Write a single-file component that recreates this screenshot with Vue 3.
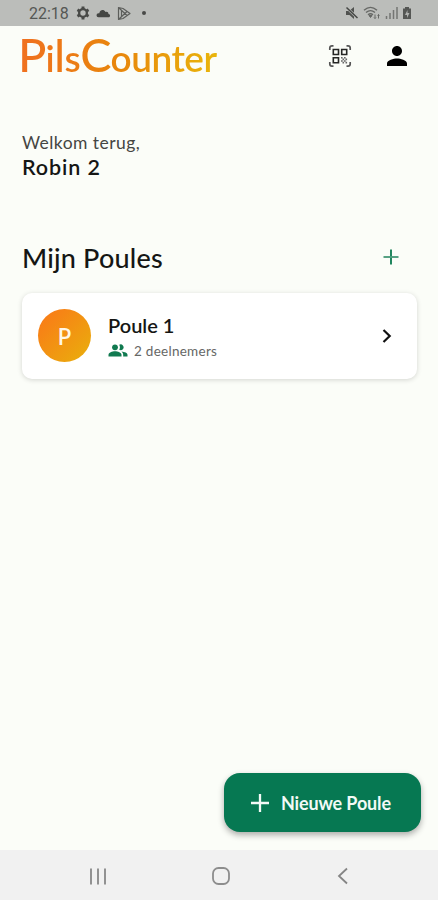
<script setup>
const pools = [{ name: 'Poule 1', initial: 'P', members: '2 deelnemers' }]
</script>

<template>
  <div class="screen">
    <div class="status">
      <div class="left">
        <span class="time">22:18</span>
        <svg class="s-gear" width="14" height="14" viewBox="0 0 24 24"><circle cx="12" cy="12" r="6.6" fill="none" stroke="#484a47" stroke-width="4" /><g stroke="#484a47" stroke-width="5"><path d="M12 1v4M12 19v4M2.5 6.5l3.4 2M18.1 15.5l3.4 2M2.5 17.5l3.4-2M18.1 8.500l3.4-2" /></g></svg>
        <svg class="s-cloud" width="15" height="9" viewBox="0 0 15 9"><path d="M2.500 8.300a2 2 0 0 1 0-4h.8C4 1 7.500-.2 9.500 3c2-.5 2.800.5 3 2 2.200.2 2 3.300 0 3.300z" fill="#444643" /></svg>
        <svg class="s-play" width="15" height="15" viewBox="0 0 15 15" fill="none" stroke="#5c5e5b" stroke-width="1.200" stroke-linejoin="round"><path d="M1.500 1.500v12L6 12.500 13 7.500 6 2.500zM2 2l8 7.500M2 13l8-7.500M4.500 4.500v6" /></svg>
        <i class="dot"></i>
      </div>
      <div class="right">
        <svg width="14" height="14" viewBox="0 0 14 14"><path d="M1 5h3l5-4v12L4.500 9H1z" fill="#50524f" /><path d="M1 1l12 11.500" stroke="#bbbdba" stroke-width="2.600" /><path d="M1.500 1.500l11 10.500" stroke="#454744" stroke-width="1.500" /></svg>
        <svg width="18" height="14" viewBox="0 0 18 14" fill="none" stroke="#666865"><path d="M1 4.200c4-3.500 9-3.500 13 0M3 6.500c3-2.500 6-2.500 9 0M5 8.700c1.700-1.300 3.300-1.300 5 0" stroke-width="1.400" /><path d="M6 9.500h3l-1.500 2z" fill="#666865" /><path d="M12 8.500v4M15.500 8.500v4M11 11.500l1 1 1-1M14.500 9.500l1-1 1 1" /></svg>
        <svg width="13" height="14" viewBox="0 0 13 14" stroke="#747673" stroke-width="1.500"><path d="M1.500 10v3M5 7v6M8.500 4v9M12 1v12" /></svg>
        <svg width="10" height="14" viewBox="0 0 10 14"><path d="M3 1h4v1.500h2V13H1V2.500h2z" fill="#555754" /><path d="M5.500 4L3 9h2v3l2.500-5H5.500z" fill="#b0b2af" /></svg>
      </div>
    </div>

    <header class="top">
      <h1 class="logo"><span class="cap">P</span>i<span class="tall">l</span>s<span class="cap">C</span>ounter</h1>
      <div class="actions">
        <svg width="24" height="24" viewBox="0 0 24 24" fill="none" stroke="#252624">
          <path d="M1.800 6V4q0-2.200 2.200-2.200h1.500M18.500 1.800H20q2.200 0 2.200 2.200v2M1.800 18v2q0 2.200 2.200 2.200h1.500M18.500 22.200H20q2.200 0 2.200-2.200v-2" stroke-width="1.700" stroke="#555" />
          <path d="M5.300 5.500h5.200v5H5.300zM13.700 5.500h5v5h-5zM5.300 13.700h5.200v5H5.300z" stroke-width="1.600" />
          <path d="M13 13h1.600v1.600H13zM16 13h1.600v1.600H16zM14.500 14.600h1.600v1.600h-1.600zM17.500 14.600h1.600v1.600h-1.600zM13 16.200h1.600v1.600H13zM16 16.200h1.600v1.600H16zM14.500 17.800h1.600v1.600h-1.600zM17.500 17.800h1.600v1.600h-1.600z" fill="#666" stroke="none" />
        </svg>
        <svg width="20" height="20" viewBox="4 4 16 16"><path d="M12 12c2.210 0 4-1.790 4-4s-1.790-4-4-4-4 1.790-4 4 1.790 4 4 4zm0 2c-2.670 0-8 1.340-8 4v2h16v-2c0-2.660-5.330-4-8-4z" fill="#000" /></svg>
      </div>
    </header>

    <main>
      <section class="welcome">
        <p class="hello">Welkom terug,</p>
        <p class="name">Robin 2</p>
      </section>
      <div class="heading">
        <h2>Mijn Poules</h2>
        <svg width="16" height="16" viewBox="0 0 16 16"><path d="M8 .500v15" stroke="#168057" stroke-width="1.900" /><path d="M.500 8h15" stroke="#4f9c7d" stroke-width="1.900" /></svg>
      </div>
      <article v-for="pool in pools" :key="pool.name" class="card">
        <div class="avatar">{{ pool.initial }}</div>
        <div class="info">
          <h3>{{ pool.name }}</h3>
          <div class="members">
            <svg width="20" height="13" viewBox="0 0 20 13" fill="#117a50"><circle cx="7" cy="3.300" r="2.900" /><path d="M.500 12.500v-1.700c0-2.300 3.700-3.500 6.500-3.500s6.500 1.200 6.500 3.500v1.700z" /><path d="M11.200.800a2.900 2.900 0 1 1 0 5q1.500-2.500 0-5zM13.500 7.400c3.200.3 6 1.400 6 3.400v1.700h-4.300v-1.700q0-2-1.700-3.400z" /></svg>
            <span>{{ pool.members }}</span>
          </div>
        </div>
        <svg class="chevron" width="10" height="14" viewBox="0 0 10 14"><path d="M1.500 1L7.700 7l-6.200 6" fill="none" stroke="#111" stroke-width="2.200" /></svg>
      </article>
    </main>

    <div class="fab-row">
      <button class="fab">
        <svg width="18" height="18" viewBox="0 0 18 18"><path d="M9 0v18M0 9h18" stroke="#f2faf6" stroke-width="2.300" /></svg>
        <span>Nieuwe Poule</span>
      </button>
    </div>

    <nav class="nav">
      <svg width="18" height="17" viewBox="0 0 18 17"><path d="M2 .500v16M9 .500v16M16 .500v16" stroke="#929292" stroke-width="2" /></svg>
      <svg width="18" height="18" viewBox="0 0 18 18"><rect x="1" y="1" width="16" height="16" rx="5.500" fill="none" stroke="#8d8d8d" stroke-width="1.800" /></svg>
      <svg width="18" height="18" viewBox="0 0 18 18"><path d="M13 1.500L5 9l8 7.500" fill="none" stroke="#858585" stroke-width="1.800" /></svg>
    </nav>
  </div>
</template>

<style>
body { background: #fbfdf8; }
</style>

<style scoped>
* { box-sizing: border-box; }
h1, h2, h3, p { margin: 0; font-weight: 400; }
svg { display: block; flex: none; }
.screen { width: 438px; height: 900px; display: flex; flex-direction: column; background: #fbfdf8; font-family: Lato, "Liberation Sans", sans-serif; color: #151614; overflow: hidden; white-space: nowrap; }
.status { height: 26px; flex: none; background: #bbbdba; display: flex; justify-content: space-between; align-items: center; padding: 0 26px 0 29px; }
.left, .right { display: flex; align-items: center; }
.time { font: 400 16px/26px Roboto, sans-serif; color: #555754; width: 47px; padding-top: 1px; }
.s-cloud { margin-left: 6px; }
.s-play { margin-left: 6px; }
.dot { width: 4px; height: 4px; border-radius: 50%; background: #484a47; margin-left: 10px; }
.right { gap: 4px; }
.top { height: 60px; flex: none; padding: 0 31px 0 18px; display: flex; justify-content: space-between; align-items: center; }
.logo { font-size: 37px; line-height: 60px; padding-top: 4px; font-weight: 600; letter-spacing: -0.5px; background: linear-gradient(90deg, #f07020, #e8860c 50%, #e9b50b); background-clip: text; -webkit-background-clip: text; color: transparent; }
.cap { font-size: 47px; line-height: 1; font-weight: 500; letter-spacing: -0.9px; }
.tall { font-size: 45px; line-height: 1; font-weight: 500; }
.actions { display: flex; gap: 35px; align-items: center; }
main { flex: 1; padding: 46px 21px 0 22px; }
.hello { font-size: 17.500px; line-height: 22px; letter-spacing: 0.45px; color: #454643; }
.name { font-size: 21.500px; line-height: 26px; font-weight: 600; letter-spacing: 0.9px; }
.heading { display: flex; justify-content: space-between; align-items: center; height: 40px; margin-top: 58px; padding-right: 18px; }
.heading svg { margin-bottom: 2px; }
h2 { font-size: 27px; line-height: 40px; font-weight: 500; letter-spacing: 0.2px; }
.card { margin-top: 15px; height: 86px; border-radius: 10px; background: #fff; box-shadow: 0 1px 5px rgba(0, 0, 0, 0.16); display: flex; align-items: center; padding: 0 25px 1px 16px; }
.avatar { width: 53px; height: 53px; border-radius: 50%; background: linear-gradient(135deg, #fb7618, #e9b00c); color: #fff7e8; font-size: 22px; line-height: 55px; font-weight: 600; text-align: center; }
.info { flex: 1; margin-left: 17px; padding-top: 3px; }
h3 { font-size: 20px; line-height: 26px; font-weight: 600; }
.members { display: flex; align-items: center; gap: 6px; font-size: 13.500px; line-height: 24px; letter-spacing: 0.27px; color: #666765; }
.members span { padding-top: 1px; }
.fab-row { display: flex; justify-content: flex-end; padding: 0 17px 18px 0; }
.fab { width: 197px; height: 59px; border: 0; border-radius: 16px; background: #067852; box-shadow: 0 3px 6px rgba(0, 0, 0, 0.32); color: #f2faf6; font: 700 18px/59px Lato, sans-serif; letter-spacing: -0.15px; display: flex; align-items: center; gap: 12px; padding: 0 0 0 27px; }
.fab span { padding-top: 2px; }
.nav { height: 50px; flex: none; background: #f1f1f1; display: flex; align-items: center; justify-content: space-between; padding: 2px 86px 0 89px; }
</style>
